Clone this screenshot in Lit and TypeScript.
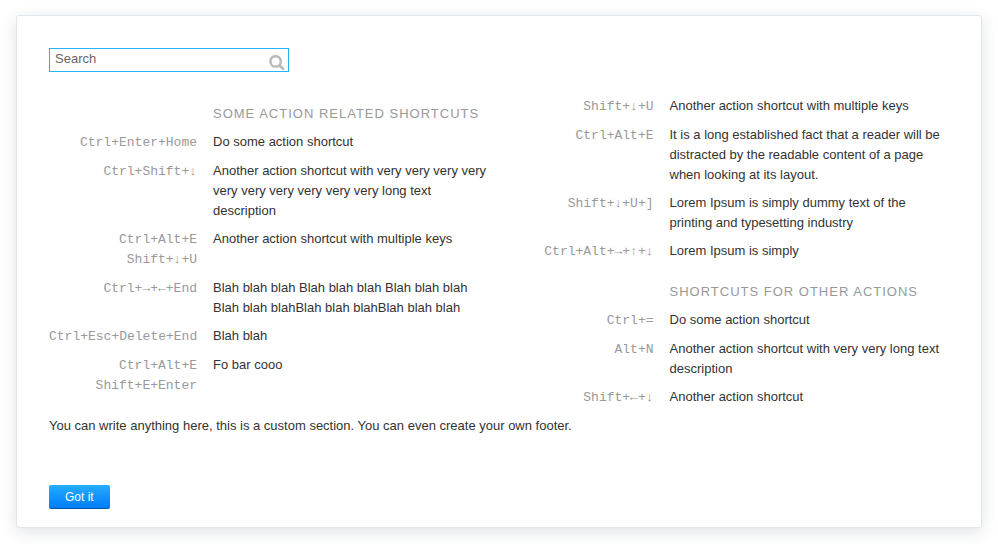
import { LitElement, html, css } from "lit";
import { customElement, property } from "lit/decorators.js";

interface Shortcut {
  keys: string[];
  text: string;
}

interface Section {
  title?: string;
  items: Shortcut[];
}

const COLUMNS: Section[][] = [
  [
    {
      title: "Some action related shortcuts",
      items: [
        { keys: ["Ctrl+Enter+Home"], text: "Do some action shortcut" },
        {
          keys: ["Ctrl+Shift+↓"],
          text: "Another action shortcut with very very very very very very very very very very long text description",
        },
        { keys: ["Ctrl+Alt+E", "Shift+↓+U"], text: "Another action shortcut with multiple keys" },
        {
          keys: ["Ctrl+→+←+End"],
          text: "Blah blah blah Blah blah blah Blah blah blah Blah blah blahBlah blah blahBlah blah blah",
        },
        { keys: ["Ctrl+Esc+Delete+End"], text: "Blah blah" },
        { keys: ["Ctrl+Alt+E", "Shift+E+Enter"], text: "Fo bar cooo" },
      ],
    },
  ],
  [
    {
      items: [
        { keys: ["Shift+↓+U"], text: "Another action shortcut with multiple keys" },
        {
          keys: ["Ctrl+Alt+E"],
          text: "It is a long established fact that a reader will be distracted by the readable content of a page when looking at its layout.",
        },
        {
          keys: ["Shift+↓+U+]"],
          text: "Lorem Ipsum is simply dummy text of the printing and typesetting industry",
        },
        { keys: ["Ctrl+Alt+→+↑+↓"], text: "Lorem Ipsum is simply" },
      ],
    },
    {
      title: "Shortcuts for other actions",
      items: [
        { keys: ["Ctrl+="], text: "Do some action shortcut" },
        { keys: ["Alt+N"], text: "Another action shortcut with very very long text description" },
        { keys: ["Shift+←+↓"], text: "Another action shortcut" },
      ],
    },
  ],
];

@customElement("shortcut-table")
export class ShortcutTable extends LitElement {
  @property({ attribute: false }) sections: Section[] = [];

  static styles = css`
    :host {
      display: block;
    }
    .table {
      width: 100%;
      border-collapse: collapse;
      table-layout: fixed;
    }
    .keys-col {
      width: 164px;
    }
    .title {
      padding: 16px 0 4px;
      color: #999;
      font-size: 13px;
      font-weight: 400;
      line-height: 20px;
      letter-spacing: 1px;
      text-align: left;
      text-transform: uppercase;
      white-space: nowrap;
    }
    .keys {
      padding: 5px 16px 4px 0;
      text-align: right;
      vertical-align: top;
    }
    .key {
      display: block;
      color: #999;
      font-family: "Courier New", "Liberation Mono", monospace;
      font-size: 13px;
      line-height: 20px;
      white-space: nowrap;
    }
    .text {
      padding: 4px 0;
      vertical-align: top;
    }
  `;

  render() {
    return html`
      <table class="table">
        <colgroup>
          <col class="keys-col" />
          <col />
        </colgroup>
        ${this.sections.map(
          (section) => html`
            <tbody>
              ${section.title
                ? html`<tr>
                    <td></td>
                    <th class="title" scope="rowgroup">${section.title}</th>
                  </tr>`
                : null}
              ${section.items.map(
                (item) => html`<tr>
                  <td class="keys">${item.keys.map((k) => html`<kbd class="key">${k}</kbd>`)}</td>
                  <td class="text">${item.text}</td>
                </tr>`
              )}
            </tbody>
          `
        )}
      </table>
    `;
  }
}

@customElement("app-root")
export class AppRoot extends LitElement {
  static styles = css`
    :host {
      display: flow-root;
      color: #333;
      background: #fff;
      font-family: "Liberation Sans", Arial, Helvetica, sans-serif;
      font-size: 13px;
      line-height: 20px;
    }
    .card {
      margin: 15px 16px 19px;
      padding: 32px 32px 18px;
      border: 1px solid #e1e7ec;
      border-radius: 3px;
      background: #fff;
      box-shadow: 0 4px 16px rgba(30, 60, 70, 0.14);
    }
    .search {
      position: relative;
      width: 240px;
      max-width: 100%;
    }
    .input {
      display: block;
      box-sizing: border-box;
      width: 100%;
      height: 24px;
      margin: 0;
      padding: 0 24px 4px 5px;
      border: 1px solid #27b3f5;
      border-radius: 0;
      outline: none;
      color: #333;
      background: #fff;
      font: inherit;
    }
    .input::placeholder {
      color: #666;
      opacity: 1;
    }
    .icon {
      position: absolute;
      right: 4px;
      top: 7px;
      width: 16px;
      height: 16px;
      pointer-events: none;
    }
    .columns {
      display: grid;
      grid-template-columns: repeat(auto-fit, minmax(min(100%, 400px), 1fr));
      gap: 0 13px;
      margin-top: 16px;
    }
    .untitled {
      padding-top: 4px;
    }
    .note {
      margin: 4px 0 49px;
    }
    .button {
      display: block;
      height: 24px;
      padding: 0 16px;
      border: 0;
      border-bottom: 1px solid #0058a8;
      border-radius: 2px;
      color: #fff;
      background: linear-gradient(#25adff, #007cfb);
      font: inherit;
      font-size: 12px;
      cursor: pointer;
    }
  `;

  render() {
    return html`
      <main class="card">
        <div class="search">
          <input class="input" type="text" placeholder="Search" aria-label="Search" />
          <svg class="icon" viewBox="0 0 16 16" aria-hidden="true">
            <circle cx="6.6" cy="6.4" r="5.2" fill="none" stroke="#bbb" stroke-width="2.5" />
            <path d="M10.6 10.4L14 13.8" stroke="#bbb" stroke-width="2.8" stroke-linecap="round" />
          </svg>
        </div>
        <div class="columns">
          ${COLUMNS.map(
            (sections) =>
              html`<shortcut-table
                class=${sections[0].title ? "titled" : "untitled"}
                .sections=${sections}
              ></shortcut-table>`
          )}
        </div>
        <p class="note">
          You can write anything here, this is a custom section. You can even create your own footer.
        </p>
        <button class="button" type="button">Got it</button>
      </main>
    `;
  }
}
